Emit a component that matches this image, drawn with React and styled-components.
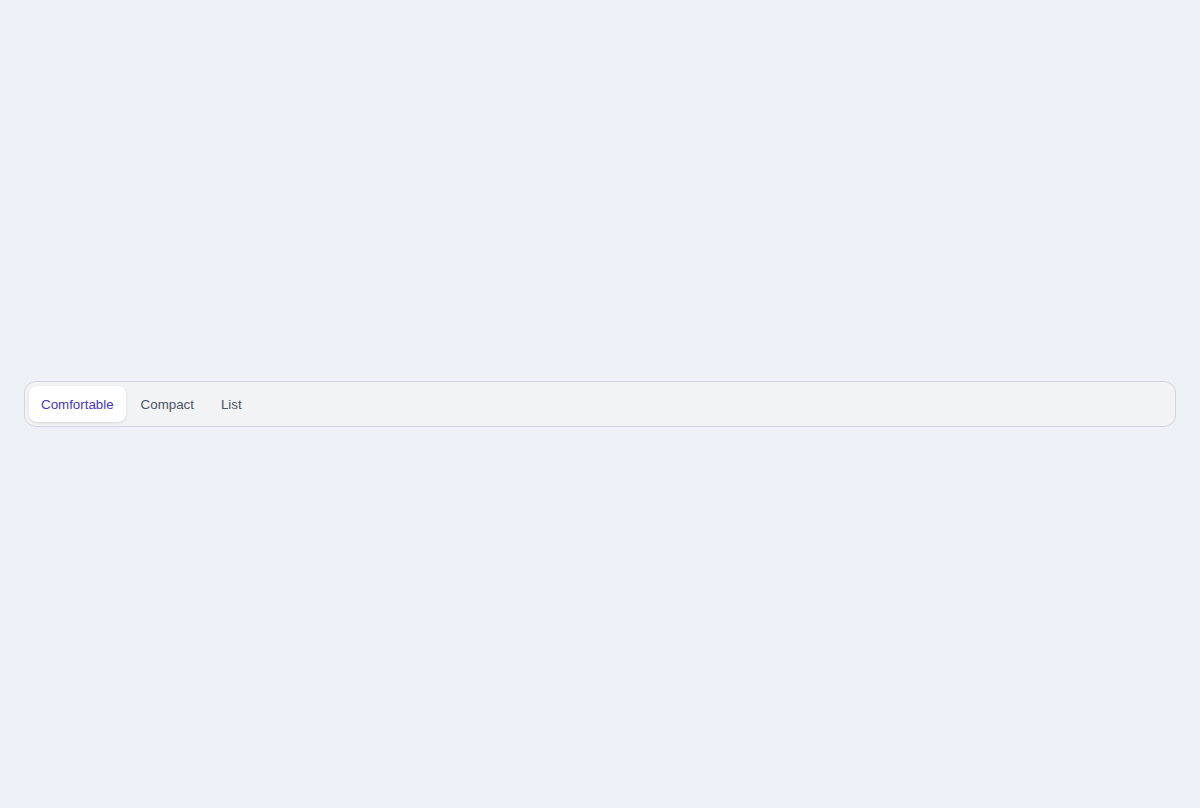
import React, { useState } from 'react';
import styled, { createGlobalStyle } from 'styled-components';

const GlobalStyle = createGlobalStyle`
  html, body {
    margin: 0;
    padding: 0;
    background: #edf0f7;
    font-family: "Liberation Sans", Arial, sans-serif;
  }
`;

const Page = styled.div`
  min-height: 100vh;
  display: flex;
  align-items: center;
  padding: 0 24px;
  box-sizing: border-box;
`;

const Segmented = styled.div`
  flex: 1;
  display: flex;
  align-items: center;
  gap: 3px;
  padding: 4px;
  background: #f2f3f5;
  border: 1px solid #d1d5db;
  border-radius: 12px;
`;

const Tab = styled.button`
  height: 36px;
  padding: 0 12px;
  border: none;
  border-radius: 8px;
  font-family: inherit;
  font-size: 13.333px;
  cursor: pointer;
  background: ${p => (p.$active ? '#ffffff' : 'transparent')};
  color: ${p => (p.$active ? '#4338ca' : '#4b5563')};
  box-shadow: ${p => (p.$active ? '0 1px 3px rgba(0, 0, 0, 0.12)' : 'none')};
`;

const views = ['Comfortable', 'Compact', 'List'];

export default function App() {
  const [view, setView] = useState('Comfortable');

  return (
    <>
      <GlobalStyle />
      <Page>
        <Segmented>
          {views.map(v => (
            <Tab key={v} $active={v === view} onClick={() => setView(v)}>
              {v}
            </Tab>
          ))}
        </Segmented>
      </Page>
    </>
  );
}
